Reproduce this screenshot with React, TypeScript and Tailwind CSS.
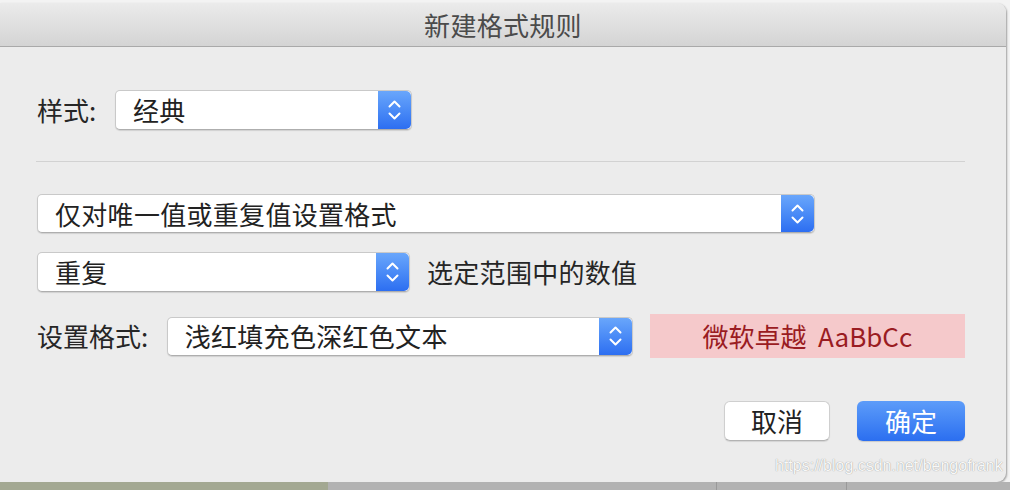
const font = { fontFamily: '"Noto Sans CJK SC", "Noto Sans", sans-serif' };

function Stepper() {
  return (
    <div className="flex h-full w-[33px] shrink-0 flex-col items-center justify-center gap-[4px] rounded-r-[5px] bg-gradient-to-b from-[#69a6fb] to-[#2d6ef1]">
      <svg width="13" height="8" viewBox="0 0 13 8" fill="none">
        <path d="M1.5 6.5 L6.5 1.5 L11.5 6.5" stroke="white" strokeWidth="2" strokeLinecap="round" strokeLinejoin="round" />
      </svg>
      <svg width="13" height="8" viewBox="0 0 13 8" fill="none">
        <path d="M1.5 1.5 L6.5 6.5 L11.5 1.5" stroke="white" strokeWidth="2" strokeLinecap="round" strokeLinejoin="round" />
      </svg>
    </div>
  );
}

interface SelectProps {
  value: string;
  className: string;
}

const Select = ({ value, className }: SelectProps) => {
  return (
    <div className={"flex shrink-0 items-stretch rounded-[5px] border border-[#c9c9c9] border-b-[#aeaeae] bg-white shadow-[0_1px_1px_rgba(0,0,0,0.12)] " + className}>
      <div className="flex flex-1 items-center pl-[17px] text-[26px] leading-none tracking-[0.3px] text-[#222]">{value}</div>
      <Stepper />
    </div>
  );
};

export default function App() {
  return (
    <div className="relative flex h-[490px] w-[1010px] flex-col overflow-hidden bg-[#f3f3f3]" style={font}>
      <div className="h-[3px] shrink-0" />
      <div className="flex h-[479px] w-[1006px] shrink-0 flex-col overflow-hidden rounded-tr-[9px] rounded-br-[9px] bg-[#ececec] shadow-[1px_1px_2px_rgba(0,0,0,0.35)]">
        <div className="flex h-[44px] shrink-0 items-center justify-center border-b border-[#a9a9a9] bg-gradient-to-b from-[#ebebeb] to-[#d4d4d4] text-[26px] tracking-[0.3px] text-[#4b4b4b]">
          新建格式规则
        </div>

        <div className="flex flex-col pl-[37px] pr-[41px]">
          <div className="mt-[43px] flex h-[40px] items-center">
            <span className="w-[78px] text-[26px] leading-none text-[#262626]">样式:</span>
            <Select value="经典" className="h-[40px] w-[297px]" />
          </div>

          <div className="mt-[31px] h-[1px] w-[929px] -ml-[1px] bg-[#d2d2d2]" />

          <Select value="仅对唯一值或重复值设置格式" className="mt-[32px] h-[39px] w-[778px]" />

          <div className="mt-[19px] flex h-[40px] items-center gap-[17px]">
            <Select value="重复" className="h-[40px] w-[373px]" />
            <span className="text-[26px] leading-none tracking-[0.3px] text-[#262626]">选定范围中的数值</span>
          </div>

          <div className="mt-[22px] flex h-[44px] items-center">
            <span className="w-[130px] text-[26px] leading-none text-[#262626]">设置格式:</span>
            <Select value="浅红填充色深红色文本" className="h-[39px] w-[466px]" />
            <div className="ml-[17px] flex h-[44px] w-[316px] items-center justify-center bg-[#f5c9cb] text-[26px] leading-none text-[#9a1c22]">
              微软卓越&nbsp; AaBbCc
            </div>
          </div>

          <div className="mt-[43px] flex justify-end gap-[27px]">
            <button className="flex h-[40px] w-[106px] items-center justify-center rounded-[6px] border border-[#cfcfcf] border-b-[#b3b3b3] bg-white text-[26px] leading-none text-[#222] shadow-[0_1px_1px_rgba(0,0,0,0.1)]">
              取消
            </button>
            <button className="flex h-[40px] w-[108px] items-center justify-center rounded-[6px] bg-gradient-to-b from-[#5d9cf9] to-[#2b6ef0] text-[26px] leading-none text-white shadow-[0_1px_1px_rgba(0,0,0,0.15)]">
              确定
            </button>
          </div>
        </div>
      </div>
      <div className="flex h-[8px] flex-1">
        <div className="w-[328px] bg-[#a3a892]" />
        <div className="w-[389px] border-r border-[#999] bg-[#b2b2b2]" />
        <div className="w-[130px] border-r border-[#999] bg-[#b2b2b2]" />
        <div className="flex-1 bg-[#b2b2b2]" />
      </div>
      <div className="absolute left-[775px] top-[458px] text-[16px] leading-none text-[#f8f8f8] [text-shadow:0_0_1px_rgba(0,0,0,0.45)]" style={{ fontFamily: '"Liberation Sans", sans-serif' }}>
        https://blog.csdn.net/bengofrank
      </div>
    </div>
  );
}
